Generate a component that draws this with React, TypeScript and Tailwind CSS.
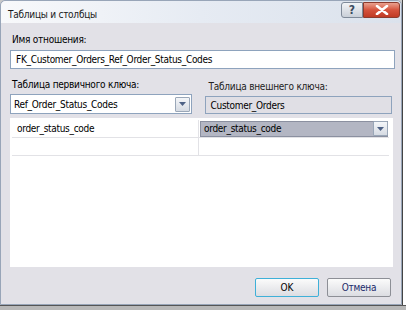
import React from "react";

const ff = "font-['DejaVu_Sans_Condensed','Liberation_Sans',sans-serif] font-stretch-condensed";
const lat = "tracking-[-0.3px]";
const cyr = "tracking-[-0.25px]";

function DropBtn() {
  return (
    <div className="w-[15px] h-[15px] border border-[#9aa7b8] bg-gradient-to-b from-[#f4f6f9] to-[#d6dbe3] flex items-center justify-center rounded-[1px]">
      <svg width="7" height="4" viewBox="0 0 7 4">
        <path d="M0 0 H7 L3.5 4 Z" fill="#4d6185" />
      </svg>
    </div>
  );
}

export default function App() {
  return (
    <div className={`w-[406px] h-[310px] bg-[#c9c9c9] relative overflow-hidden text-[10px] text-black ${ff}`}>
      <div className="absolute right-0 top-0 w-[4px] h-full bg-white border-l border-[#444]" />
      <div className="absolute left-0 bottom-0 w-full h-[5px] bg-[#b8b8b8] border-t border-[#555]" />
      <div className="w-[402px] h-[305px] border border-[#98a5b8] rounded-t-[5px] bg-[#e2e1e7] flex flex-col relative">
        <div className="h-[22px] flex items-center pl-[7px] pt-[5px] bg-gradient-to-r from-[#f8f9fb] via-[#e6ebf3] to-[#dbe2ec] rounded-t-[5px] relative">
          <span className={`text-[10px] text-[#1a1a1a] ${cyr}`}>Таблицы и столбцы</span>
          <div className="absolute right-[1px] top-[1px] flex">
            <div className="w-[22px] h-[16px] border border-[#7f8a99] rounded-l-[3px] bg-gradient-to-b from-[#f2f4f7] to-[#c9cfd8] flex items-center justify-center text-[12px] text-[#3d4b60] font-bold">?</div>
            <div className="w-[37px] h-[16px] border border-[#8c3b2e] rounded-r-[3px] bg-gradient-to-b from-[#e9a08f] via-[#d5523c] to-[#c03a23] flex items-center justify-center">
              <svg width="14" height="10" viewBox="0 0 14 10">
                <path d="M2 1 L12 9 M12 1 L2 9" stroke="#ffffff" strokeWidth="2.6" strokeLinecap="round" />
              </svg>
            </div>
          </div>
        </div>
        <div className="flex-1 flex flex-col px-[9px] pt-[10px] pb-[6px]">
          <div className={`pl-[2px] leading-[13px] ${cyr}`}>Имя отношения:</div>
          <div className={`mt-[4px] h-[19px] w-[385px] border border-[#8ea3bd] bg-white flex items-center pl-[5px] ${lat}`}>
            FK_Customer_Orders_Ref_Order_Status_Codes
          </div>
          <div className="mt-[9px] flex">
            <div className="w-[183px] flex flex-col">
              <div className={`pl-[2px] leading-[13px] ${cyr}`}>Таблица первичного ключа:</div>
              <div className="mt-[3px] h-[20px] border border-[#8ea3bd] bg-white flex items-center pl-[3px] pr-[1px] justify-between">
                <span className={lat}>Ref_Order_Status_Codes</span>
                <DropBtn />
              </div>
            </div>
            <div className="ml-[13px] w-[189px] flex flex-col">
              <div className={`pl-[4px] leading-[13px] mt-[2px] text-[#222] ${cyr}`}>Таблица внешнего ключа:</div>
              <div className={`mt-[3px] h-[18px] border border-[#8ea3bd] bg-[#e0dfe5] flex items-center pl-[5px] ${lat}`}>
                Customer_Orders
              </div>
            </div>
          </div>
          <div className="mt-[4px] h-[149px] w-[383px] bg-white flex flex-col pl-[2px] pt-[2px]">
            <div className="flex h-[18px] border-b border-[#e2e2e6] w-[377px]">
              <div className={`w-[187px] border-r border-[#e2e2e6] flex items-center pl-[5px] ${lat}`}>order_status_code</div>
              <div className="flex-1 flex items-center pl-[1px] pr-[1px]">
                <div className="flex-1 h-[16px] bg-[#b3b6c3] border border-[#8b90a0] flex items-center pl-[3px] justify-between">
                  <span className={lat}>order_status_code</span>
                  <div className="-mr-[1px]"><DropBtn /></div>
                </div>
              </div>
            </div>
            <div className="flex h-[18px] border-b border-[#e2e2e6] w-[377px]">
              <div className="w-[187px] border-r border-[#e2e2e6]" />
              <div className="flex-1" />
            </div>
          </div>
          <div className="mt-[11px] flex justify-end gap-[8px] pr-[1px]">
            <button className={`w-[64px] h-[19px] border border-[#3fb0d8] rounded-[2px] bg-gradient-to-b from-[#fbfbfb] to-[#dcdde2] text-[10px] ${ff}`}>OK</button>
            <button className={`w-[64px] h-[19px] border border-[#8d8f96] rounded-[2px] bg-gradient-to-b from-[#fbfbfb] to-[#dcdde2] text-[10px] text-[#1b2a6b] ${cyr} ${ff}`}>Отмена</button>
          </div>
        </div>
      </div>
    </div>
  );
}
